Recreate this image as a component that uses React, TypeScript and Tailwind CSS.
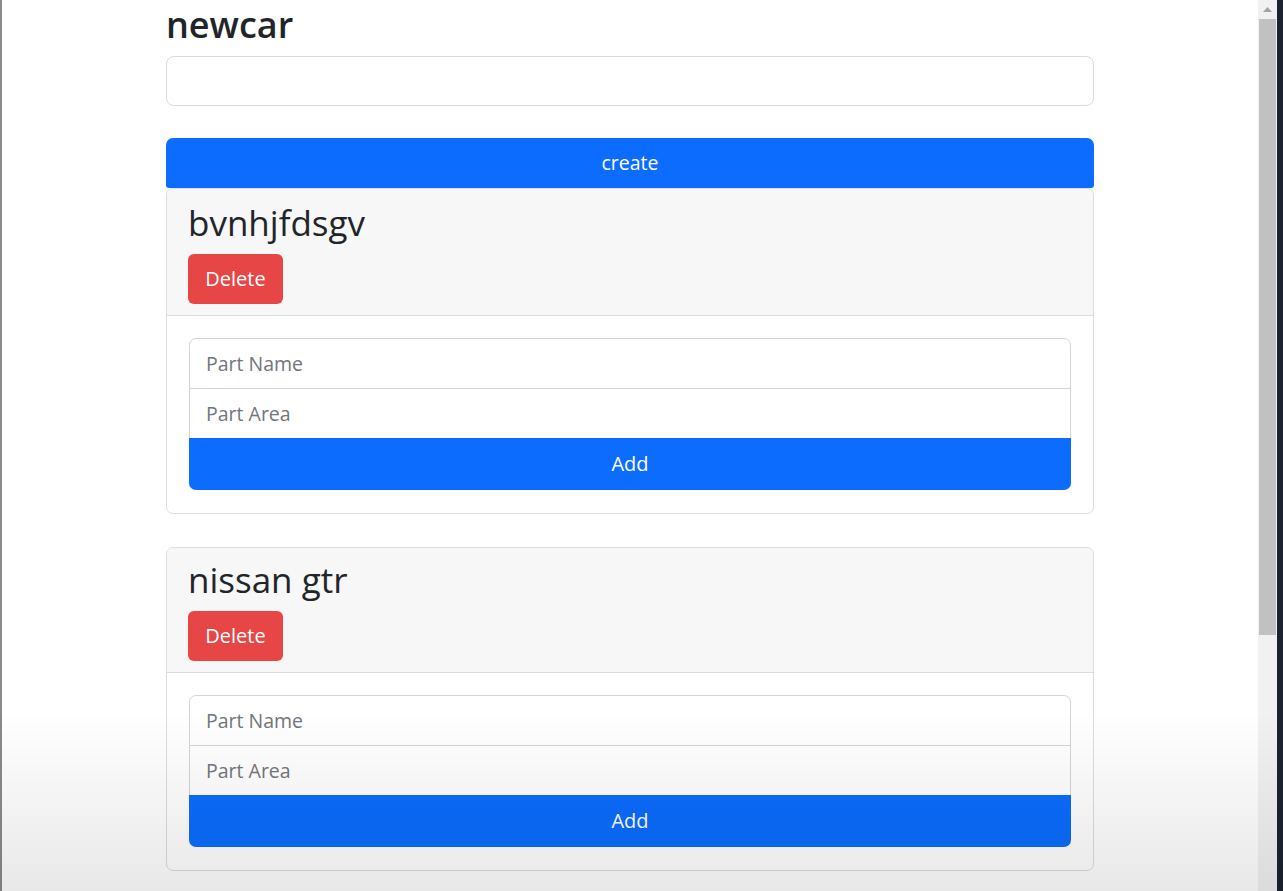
import React from "react";

const font = { fontFamily: '"Open Sans", "Noto Sans", sans-serif' };

function CarCard({ name, first }: { name: string; first?: boolean }) {
  return (
    <div className="rounded-[7px] border border-[#dcdcdc] bg-white">
      <div
        className={`rounded-t-[7px] border-b border-[#dcdcdc] bg-[#f7f7f7] px-[21px] pb-[11px] ${
          first ? "pt-[9px]" : "pt-[7px]"
        }`}
      >
        <h2 className="text-[35px] font-medium leading-[50px] text-[#212529]">{name}</h2>
        <button className="mt-[6px] h-[50px] w-[95px] rounded-[6px] bg-[#e64646] text-[20px] text-white">
          Delete
        </button>
      </div>
      <div className="px-[22px] pt-[22px] pb-[23px]">
        <div className="flex flex-col">
          <input
            placeholder="Part Name"
            className="h-[51px] rounded-t-[7px] border border-[#d4d4d4] bg-white px-[16px] text-[19.5px] text-[#212529] outline-none placeholder:text-[#72767b]"
          />
          <input
            placeholder="Part Area"
            className="-mt-px h-[51px] border border-[#d4d4d4] bg-white px-[16px] text-[19.5px] text-[#212529] outline-none placeholder:text-[#72767b]"
          />
          <button className="-mt-px h-[52px] rounded-b-[7px] bg-[#0b6cfd] text-[20px] text-white">
            Add
          </button>
        </div>
      </div>
    </div>
  );
}

export default function App() {
  return (
    <div
      className="relative flex h-[891px] w-[1283px] overflow-hidden bg-white"
      style={font}
    >
      <div className="w-[2px] shrink-0 bg-[#8a8a8a]" />
      <div className="flex-1">
        <div className="mx-auto w-[928px]">
          <h1 className="pt-[1px] text-[36px] font-semibold leading-[48px] text-[#212529]">
            newcar
          </h1>
          <input className="mt-[7px] block h-[50px] w-full rounded-[8px] border border-[#dadada] bg-white px-[16px] outline-none" />
          <button className="mt-[32px] block h-[50px] w-full rounded-t-[7px] rounded-b-[3px] bg-[#0b6cfd] text-[19.5px] text-white">
            create
          </button>
          <div className="flex flex-col gap-[33px]">
            <CarCard name="bvnhjfdsgv" first />
            <CarCard name="nissan gtr" />
          </div>
        </div>
      </div>
      <div className="flex w-[19px] shrink-0 flex-col bg-[#f1f1f1]">
        <div className="flex h-[19px] items-center justify-center">
          <svg width="9" height="5" viewBox="0 0 9 5">
            <path d="M0 5 L4.5 0 L9 5 Z" fill="#a3a3a3" />
          </svg>
        </div>
        <div className="mx-[1px] h-[616px] bg-[#c1c1c1]" />
      </div>
      <div className="w-[6px] shrink-0 bg-[#1c2230]" />
      <div className="pointer-events-none absolute inset-x-0 bottom-0 h-[180px] bg-gradient-to-b from-transparent to-[rgba(0,0,0,0.09)]" />
    </div>
  );
}
